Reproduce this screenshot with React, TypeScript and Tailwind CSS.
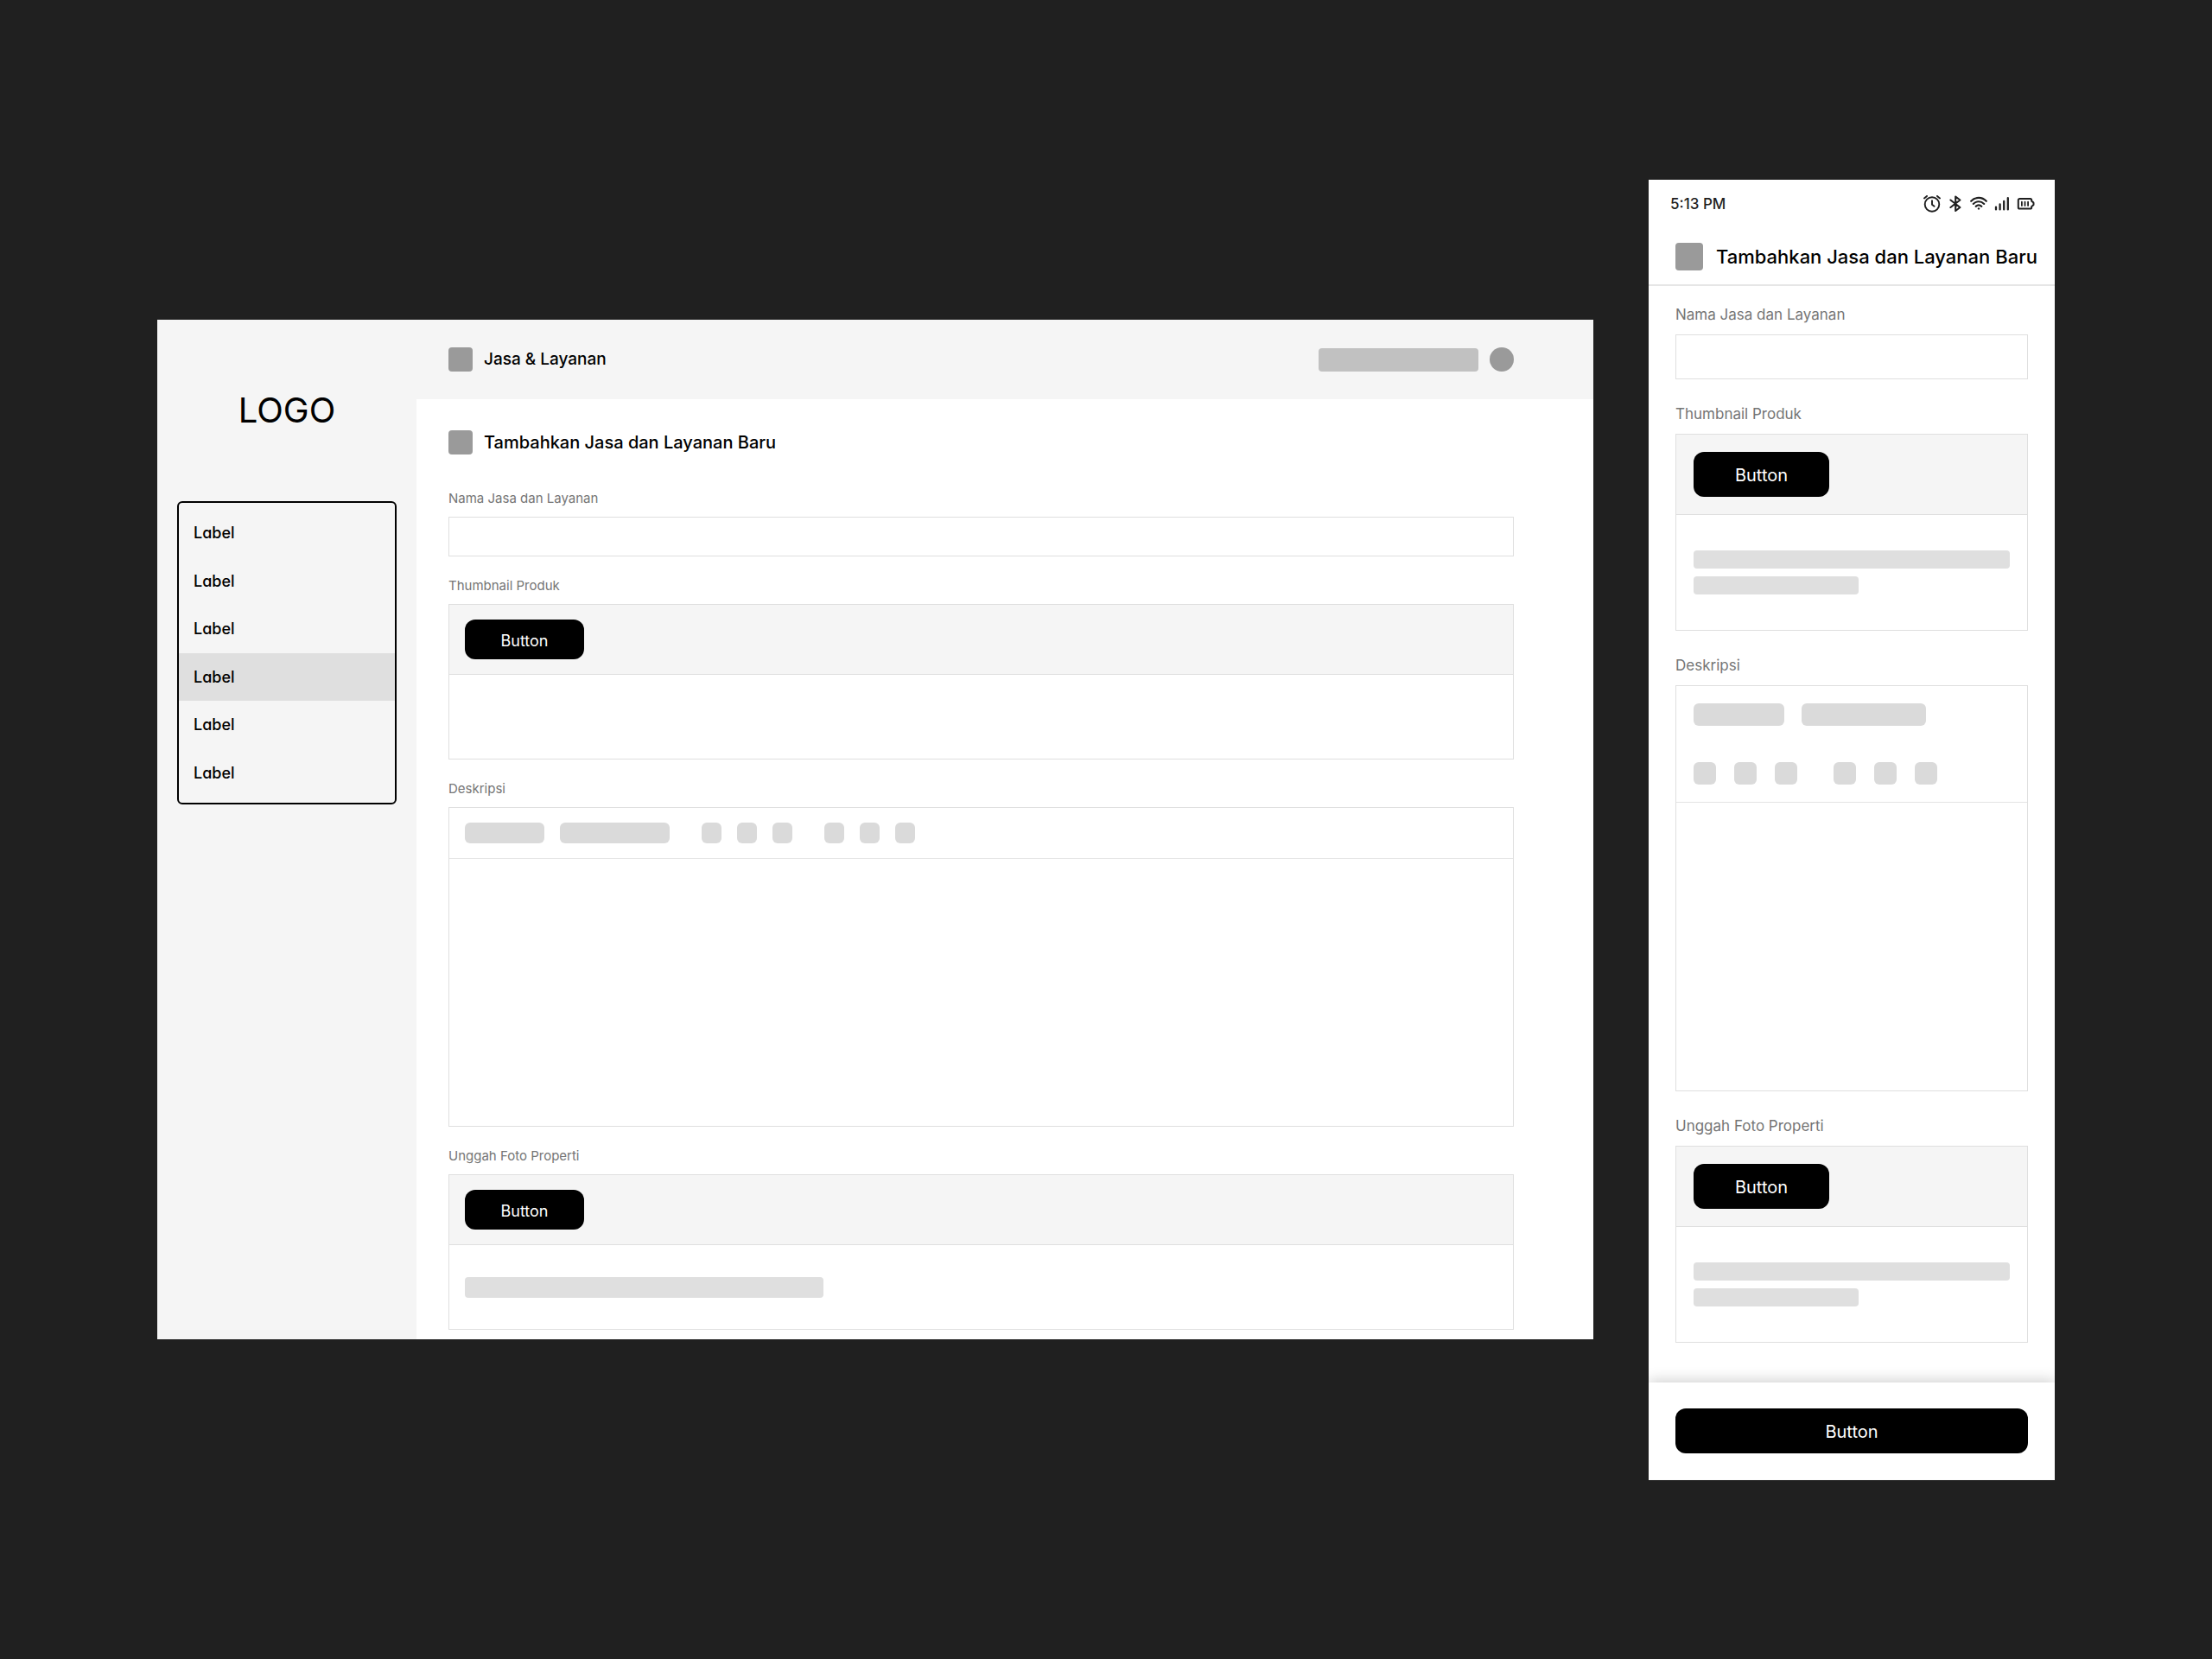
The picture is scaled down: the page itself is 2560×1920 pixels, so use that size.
import type { ReactNode } from "react";

function Bar({ className }: { className: string }) {
  return <div className={`rounded ${className}`} />;
}

function ToolButton({ label, className }: { label: string; className: string }) {
  return <button type="button" aria-label={label} className={`rounded-md bg-[#dadada] ${className}`} />;
}

function DesktopField({ label, id, children }: { label: string; id: string; children: ReactNode }) {
  return (
    <div className="flex flex-col gap-[11px]">
      <label htmlFor={id} className="text-[15px] leading-5 text-[#757575]">
        {label}
      </label>
      {children}
    </div>
  );
}

function DesktopUpload({ id, children }: { id: string; children?: ReactNode }) {
  return (
    <div className="border border-[#dfdfdf]">
      <div className="border-b border-[#dfdfdf] bg-[#f5f5f5] px-[18px] py-[17px]">
        <button id={id} type="button" className="block h-[46px] w-[138px] rounded-xl bg-black pt-0.5 text-[18px] text-white">
          Button
        </button>
      </div>
      <div className="flex h-[97px] items-center px-[18px]">{children}</div>
    </div>
  );
}

const menu = [1, 2, 3, 4, 5, 6];

function DesktopScreen() {
  return (
    <section className="flex min-w-0 flex-1 bg-white">
      <aside className="flex w-[300px] shrink-0 flex-col bg-[#f5f5f5] px-[23px] pt-[81px]">
        <div className="text-center text-[40px] leading-[48px] text-black">LOGO</div>
        <nav className="mt-[81px] flex h-[351px] flex-col rounded-md border-2 border-black py-[7px]">
          {menu.map((item) => (
            <a
              key={item}
              href="#"
              className={`flex flex-1 items-center px-[17px] text-[18px] font-medium text-black [font-feature-settings:'cv11'] ${item === 4 ? "bg-[#dfdfdf]" : ""}`}
            >
              Label
            </a>
          ))}
        </nav>
      </aside>
      <div className="flex min-w-0 flex-1 flex-col">
        <header className="flex h-[92px] items-center bg-[#f5f5f5] pr-[92px] pl-[37px]">
          <Bar className="size-7 bg-[#9a9a9a]" />
          <h1 className="ml-[13px] flex-1 text-[19px] leading-7 font-medium text-black">Jasa &amp; Layanan</h1>
          <Bar className="h-[27px] w-[185px] bg-[#c1c1c1]" />
          <div className="ml-[13px] size-7 rounded-full bg-[#9a9a9a]" />
        </header>
        <main className="flex flex-col pt-9 pr-[92px] pb-[11px] pl-[37px]">
          <div className="flex items-center">
            <Bar className="size-7 bg-[#9a9a9a]" />
            <h2 className="ml-[13px] text-[20px] leading-7 font-medium text-black">Tambahkan Jasa dan Layanan Baru</h2>
          </div>
          <form className="mt-[41px] flex flex-col gap-6">
            <DesktopField label="Nama Jasa dan Layanan" id="d-name">
              <input id="d-name" type="text" className="h-[46px] w-full border border-[#dfdfdf] px-4 text-[18px] outline-none" />
            </DesktopField>
            <DesktopField label="Thumbnail Produk" id="d-thumb">
              <DesktopUpload id="d-thumb" />
            </DesktopField>
            <DesktopField label="Deskripsi" id="d-desc">
              <div className="border border-[#dfdfdf]">
                <div className="flex gap-[37px] border-b border-[#e4e4e4] px-[18px] py-[17px]">
                  <div className="flex gap-[18px]">
                    <ToolButton label="Gaya teks" className="h-6 w-[92px]" />
                    <ToolButton label="Jenis huruf" className="h-6 w-[127px]" />
                  </div>
                  <div className="flex gap-[18px]">
                    <ToolButton label="Tebal" className="h-6 w-[23px]" />
                    <ToolButton label="Miring" className="h-6 w-[23px]" />
                    <ToolButton label="Garis bawah" className="h-6 w-[23px]" />
                  </div>
                  <div className="flex gap-[18px]">
                    <ToolButton label="Rata kiri" className="h-6 w-[23px]" />
                    <ToolButton label="Rata tengah" className="h-6 w-[23px]" />
                    <ToolButton label="Rata kanan" className="h-6 w-[23px]" />
                  </div>
                </div>
                <textarea id="d-desc" className="block h-[309px] w-full resize-none p-4 text-[18px] outline-none" />
              </div>
            </DesktopField>
            <DesktopField label="Unggah Foto Properti" id="d-photo">
              <DesktopUpload id="d-photo">
                <Bar className="h-6 w-[415px] bg-[#dfdfdf]" />
              </DesktopUpload>
            </DesktopField>
          </form>
        </main>
      </div>
    </section>
  );
}

function MobileField({ label, id, children }: { label: string; id: string; children: ReactNode }) {
  return (
    <div className="flex flex-col gap-[11px]">
      <label htmlFor={id} className="text-[17px] leading-6 text-[#757575]">
        {label}
      </label>
      {children}
    </div>
  );
}

function MobileUpload({ id }: { id: string }) {
  return (
    <div className="border border-[#dfdfdf]">
      <div className="border-b border-[#dfdfdf] bg-[#f5f5f5] px-5 py-5">
        <button id={id} type="button" className="block h-[52px] w-[157px] rounded-xl bg-black pt-0.5 text-[20px] text-white">
          Button
        </button>
      </div>
      <div className="flex flex-col gap-[9px] px-5 py-[41px]">
        <Bar className="h-[21px] bg-[#dfdfdf]" />
        <Bar className="h-[21px] w-[191px] bg-[#dfdfdf]" />
      </div>
    </div>
  );
}

function StatusIcons() {
  return (
    <div className="flex items-center gap-2 text-[#1f1f1f]">
      <svg className="h-5 w-5" viewBox="0 0 20 20" fill="none" stroke="currentColor" strokeWidth="1.9" strokeLinecap="round" strokeLinejoin="round" aria-hidden="true">
        <circle cx="10" cy="10.500" r="8.300" />
        <path d="M10 6.300v4.400l2.600 2" />
        <path d="M1 3.400 4 .900M19 3.400 16 .900" />
      </svg>
      <svg className="h-5 w-[18px]" viewBox="0 0 18 20" fill="none" stroke="currentColor" strokeWidth="2.100" strokeLinejoin="round" strokeLinecap="round" aria-hidden="true">
        <path d="m3.400 5.500 11 8.500L9.200 18V1.500l5.200 4-11 8.500" />
      </svg>
      <svg className="h-5 w-5" viewBox="0 0 20 20" fill="none" stroke="currentColor" strokeWidth="2.100" strokeLinecap="round" aria-hidden="true">
        <path d="M1.200 6.800C6 1.600 14 1.600 18.800 6.800" />
        <path d="M3.800 10c3.600-3.600 8.800-3.600 12.400 0" />
        <path d="M6.700 12.900c2-1.800 4.600-1.800 6.600 0" />
        <circle cx="10" cy="15.400" r="1.200" fill="currentColor" stroke="none" />
      </svg>
      <svg className="h-5 w-[18px]" viewBox="0 0 18 20" fill="none" stroke="currentColor" strokeWidth="2.300" strokeLinecap="round" aria-hidden="true">
        <path d="M2 13.600V16.400M6.600 10.400V16.400M11.200 6.800V16.400M15.800 3.200V16.400" />
      </svg>
      <svg className="h-5 w-[22px]" viewBox="0 0 22 20" fill="none" stroke="currentColor" strokeWidth="2" strokeLinecap="round" strokeLinejoin="round" aria-hidden="true">
        <path d="M3.400 4h12.200a1.600 1.600 0 0 1 1.600 1.600v1l1.900 1.500a1 1 0 0 1 .4.800v1.800a1 1 0 0 1-.4.800l-1.900 1.500v1a1.600 1.600 0 0 1-1.600 1.600H3.400a1.600 1.600 0 0 1-1.600-1.600V5.600A1.600 1.600 0 0 1 3.400 4z" />
        <path d="M5.900 7.700v4.200M9.500 7.700v4.200M13.100 7.700v4.200" strokeWidth="1.800" />
      </svg>
    </div>
  );
}

function MobileScreen() {
  return (
    <section className="flex w-[470px] shrink-0 flex-col bg-white">
      <div className="flex h-14 items-center justify-between pr-[22px] pl-[25px]">
        <span className="text-[17px] leading-6 font-medium text-[#1f1f1f]">5:13 PM</span>
        <StatusIcons />
      </div>
      <header className="flex h-[67px] items-center gap-[15px] border-b-2 border-[#e6e6e6] pt-0.5 pl-[31px]">
        <Bar className="size-8 shrink-0 bg-[#9a9a9a]" />
        <h2 className="text-[22px] leading-8 font-medium whitespace-nowrap text-black">Tambahkan Jasa dan Layanan Baru</h2>
      </header>
      <form className="flex flex-col gap-7 px-[31px] pt-[21px] pb-[46px]">
        <MobileField label="Nama Jasa dan Layanan" id="m-name">
          <input id="m-name" type="text" className="h-[52px] w-full border border-[#dfdfdf] px-5 text-[20px] outline-none" />
        </MobileField>
        <MobileField label="Thumbnail Produk" id="m-thumb">
          <MobileUpload id="m-thumb" />
        </MobileField>
        <MobileField label="Deskripsi" id="m-desc">
          <div className="border border-[#dfdfdf]">
            <div className="flex flex-col gap-[42px] border-b border-[#e4e4e4] px-5 py-5">
              <div className="flex gap-5">
                <ToolButton label="Gaya teks" className="h-[26px] w-[105px]" />
                <ToolButton label="Jenis huruf" className="h-[26px] w-[144px]" />
              </div>
              <div className="flex gap-[42px]">
                <div className="flex gap-[21px]">
                  <ToolButton label="Tebal" className="size-[26px]" />
                  <ToolButton label="Miring" className="size-[26px]" />
                  <ToolButton label="Garis bawah" className="size-[26px]" />
                </div>
                <div className="flex gap-[21px]">
                  <ToolButton label="Rata kiri" className="size-[26px]" />
                  <ToolButton label="Rata tengah" className="size-[26px]" />
                  <ToolButton label="Rata kanan" className="size-[26px]" />
                </div>
              </div>
            </div>
            <textarea id="m-desc" className="block h-[333px] w-full resize-none p-5 text-[20px] outline-none" />
          </div>
        </MobileField>
        <MobileField label="Unggah Foto Properti" id="m-photo">
          <MobileUpload id="m-photo" />
        </MobileField>
      </form>
      <footer className="bg-white px-[31px] pt-[30px] pb-[31px] shadow-[0_-4px_14px_rgba(0,0,0,0.16)] [clip-path:inset(-24px_0_0_0)]">
        <button type="button" className="block h-[52px] w-full rounded-xl bg-black pt-0.5 text-[20px] text-white">
          Button
        </button>
      </footer>
    </section>
  );
}

export default function App() {
  return (
    <div className="flex min-h-screen items-center gap-16 bg-[#202020] px-[182px] font-['Inter',sans-serif]">
      <DesktopScreen />
      <MobileScreen />
    </div>
  );
}
